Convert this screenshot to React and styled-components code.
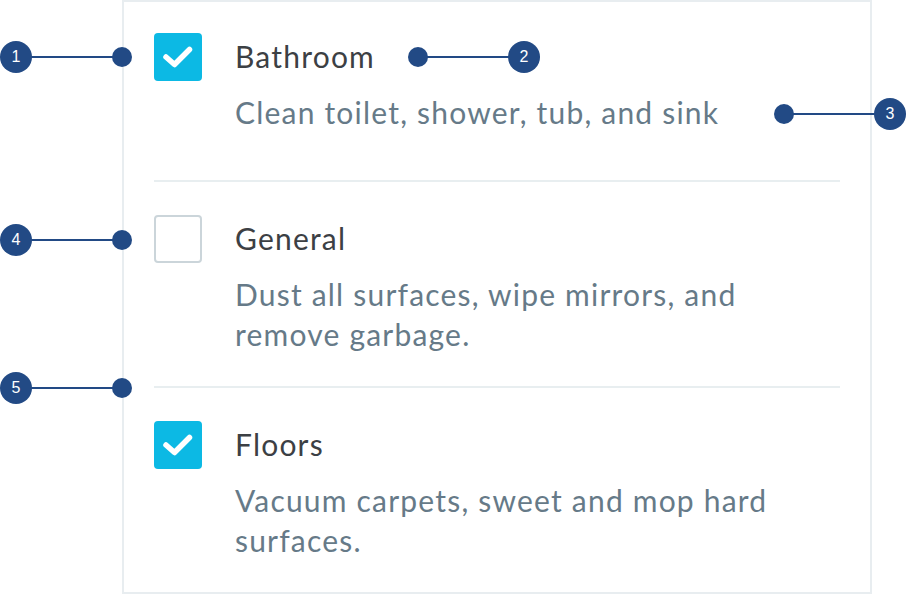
import React from "react";
import styled, { createGlobalStyle } from "styled-components";

const tasks = [
  {
    id: 1,
    title: "Bathroom",
    text: "Clean toilet, shower, tub, and sink",
    checked: true,
    bottom: 48,
  },
  {
    id: 2,
    title: "General",
    text: "Dust all surfaces, wipe mirrors, and remove garbage.",
    checked: false,
    bottom: 32,
  },
  {
    id: 3,
    title: "Floors",
    text: "Vacuum carpets, sweet and mop hard surfaces.",
    checked: true,
    bottom: 30,
  },
];

// callouts: circle with number + line + dot
const callouts = [
  { n: 1, y: 57, circle: 16, dot: 122 },
  { n: 2, y: 57, circle: 524, dot: 418 },
  { n: 3, y: 114, circle: 890, dot: 784 },
  { n: 4, y: 240, circle: 16, dot: 122 },
  { n: 5, y: 388, circle: 16, dot: 122 },
];

const App = () => {
  return (
    <>
      <GlobalStyle />
      <Page>
        <Card>
          {tasks.map((task, i) => (
            <React.Fragment key={task.id}>
              {i > 0 && <Divider />}
              <Item $bottom={task.bottom}>
                <Box $checked={task.checked}>
                  {task.checked && (
                    <svg width="48" height="48" viewBox="0 0 48 48">
                      <path
                        d="M12 24 L20.5 31.5 L35.5 16.5"
                        fill="none"
                        stroke="#fff"
                        strokeWidth="5.5"
                        strokeLinecap="round"
                        strokeLinejoin="round"
                      />
                    </svg>
                  )}
                </Box>
                <Body>
                  <Title>{task.title}</Title>
                  <Desc>{task.text}</Desc>
                </Body>
              </Item>
            </React.Fragment>
          ))}
        </Card>
        {callouts.map((c) => {
          const left = Math.min(c.circle, c.dot);
          const width = Math.abs(c.circle - c.dot);
          return (
            <React.Fragment key={c.n}>
              <Line style={{ left, width, top: c.y - 1 }} />
              <Dot style={{ left: c.dot - 10, top: c.y - 10 }} />
              <Badge style={{ left: c.circle - 16, top: c.y - 16 }}>{c.n}</Badge>
            </React.Fragment>
          );
        })}
      </Page>
    </>
  );
};

// CSS
const GlobalStyle = createGlobalStyle`
  body {
    margin: 0;
    background: #fff;
    font-family: Lato, "Open Sans", sans-serif;
  }
`;
const Page = styled.div`
  position: relative;
  width: 906px;
  height: 594px;
`;
const Card = styled.div`
  box-sizing: border-box;
  margin-left: 122px;
  width: 750px;
  height: 594px;
  border: 2px solid #e8edf0;
  padding: 31px 30px 0 30px;
  background: #fff;
`;
const Item = styled.div`
  display: flex;
  gap: 33px;
  padding-bottom: ${(p) => p.$bottom}px;
`;
const Divider = styled.div`
  height: 2px;
  background: #e8eef0;
  margin-bottom: 33px;
`;
const Box = styled.div`
  box-sizing: border-box;
  flex: 0 0 48px;
  width: 48px;
  height: 48px;
  border-radius: 4px;
  background: ${(p) => (p.$checked ? "#0cb9e4" : "#fff")};
  border: ${(p) => (p.$checked ? "none" : "2px solid #cbd5da")};
  svg {
    display: block;
  }
`;
const Body = styled.div`
  display: flex;
  flex-direction: column;
  gap: 16px;
  padding-top: 3px;
  max-width: 580px;
`;
const Title = styled.div`
  font-size: 30px;
  line-height: 40px;
  letter-spacing: 1.2px;
  color: #3c4044;
`;
const Desc = styled.div`
  font-size: 30px;
  line-height: 40px;
  letter-spacing: 1.2px;
  color: #667a88;
`;
const Line = styled.div`
  position: absolute;
  height: 2px;
  background: #224a85;
`;
const Dot = styled.div`
  position: absolute;
  width: 20px;
  height: 20px;
  border-radius: 50%;
  background: #224a85;
`;
const Badge = styled.div`
  position: absolute;
  width: 32px;
  height: 32px;
  border-radius: 50%;
  background: #224a85;
  color: #fff;
  font-family: "Liberation Sans", Arial, sans-serif;
  font-size: 16px;
  display: flex;
  align-items: center;
  justify-content: center;
`;

export default App;
